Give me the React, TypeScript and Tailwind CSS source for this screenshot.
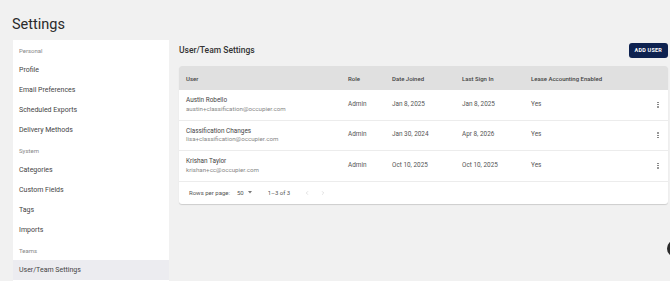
import { ChevronLeft, ChevronRight } from 'lucide-react';

type SideItem = { label: string; group?: boolean; active?: boolean };

const sideItems: SideItem[] = [
  { label: 'Personal', group: true },
  { label: 'Profile' },
  { label: 'Email Preferences' },
  { label: 'Scheduled Exports' },
  { label: 'Delivery Methods' },
  { label: 'System', group: true },
  { label: 'Categories' },
  { label: 'Custom Fields' },
  { label: 'Tags' },
  { label: 'Imports' },
  { label: 'Teams', group: true },
  { label: 'User/Team Settings', active: true },
];

const users = [
  {
    name: 'Austin Robello',
    email: 'austin+classification@occupier.com',
    role: 'Admin',
    joined: 'Jan 8, 2025',
    lastSignIn: 'Jan 8, 2025',
    lease: 'Yes',
  },
  {
    name: 'Classification Changes',
    email: 'lisa+classification@occupier.com',
    role: 'Admin',
    joined: 'Jan 30, 2024',
    lastSignIn: 'Apr 8, 2026',
    lease: 'Yes',
  },
  {
    name: 'Krishan Taylor',
    email: 'krishan+cc@occupier.com',
    role: 'Admin',
    joined: 'Oct 10, 2025',
    lastSignIn: 'Oct 10, 2025',
    lease: 'Yes',
  },
];

const cols = 'grid grid-cols-[162px_44px_70px_69px_1fr_18px] items-center pl-[7px] pr-[1px]';

function Kebab() {
  return (
    <div className="flex flex-col items-center gap-[1px]">
      <span className="w-[1.3px] h-[1.3px] rounded-full bg-[#777]" />
      <span className="w-[1.3px] h-[1.3px] rounded-full bg-[#777]" />
      <span className="w-[1.3px] h-[1.3px] rounded-full bg-[#777]" />
    </div>
  );
}

export default function App() {
  return (
    <div className="relative w-[670px] h-[281px] overflow-hidden bg-[#f1f1f1] text-[#444] font-['Roboto',sans-serif]">
      {/* Title */}
      <h1 className="pl-[12px] pt-[15px] text-[14.5px] leading-[20px] text-[#2a2a2a]">Settings</h1>

      <div className="flex gap-[10px] pl-[13px] mt-[5px]">
        {/* Sidebar */}
        <nav className="w-[156px] bg-white pb-[20px] shrink-0">
          {sideItems.map((item) => (
            <div
              key={item.label}
              className={`h-[20px] flex items-center px-[6px] ${
                item.group ? 'text-[6px] text-[#888]' : 'text-[7px] text-[#444]'
              } ${item.active ? 'bg-[#ececf0]' : ''}`}
            >
              {item.label}
            </div>
          ))}
        </nav>

        {/* Main */}
        <main className="flex-1 pr-[2px]">
          <div className="h-[19px] flex items-center justify-between">
            <h2 className="text-[8.5px] font-medium text-[#333] mt-[1px]">User/Team Settings</h2>
            <button className="h-[15px] mt-[1px] px-[6px] rounded-[3px] bg-[#0e2250] text-white text-[5.5px] font-bold tracking-[0.2px]">
              ADD USER
            </button>
          </div>

          {/* Table */}
          <div className="mt-[7px] bg-white rounded-[3px] overflow-hidden shadow-[0_1px_1px_rgba(0,0,0,0.15)]">
            <div className={`${cols} h-[24px] bg-[#e0e0e0] text-[6px] font-medium text-[#444]`}>
              <span>User</span>
              <span>Role</span>
              <span>Date Joined</span>
              <span>Last Sign In</span>
              <span>Lease Accounting Enabled</span>
              <span />
            </div>

            {users.map((u) => (
              <div key={u.email} className={`${cols} h-[30.5px] border-b border-[#ececec] text-[6.4px] text-[#555]`}>
                <div className="flex flex-col leading-[8.5px]">
                  <span className="text-[6.4px] text-[#444]">{u.name}</span>
                  <span className="text-[6.2px] text-[#888]">{u.email}</span>
                </div>
                <span>{u.role}</span>
                <span>{u.joined}</span>
                <span>{u.lastSignIn}</span>
                <span>{u.lease}</span>
                <div className="flex justify-center">
                  <Kebab />
                </div>
              </div>
            ))}

            <div className="h-[22px] flex items-center pl-[10px] text-[6px] text-[#555]">
              <span>Rows per page:</span>
              <span className="ml-[7px]">50</span>
              <svg className="ml-[4px]" width="4" height="2.5" viewBox="0 0 4 2.5">
                <path d="M0 0 L4 0 L2 2.5 Z" fill="#777" />
              </svg>
              <span className="ml-[16px]">1–3 of 3</span>
              <ChevronLeft className="ml-[14px] w-[6px] h-[6px] text-[#c4c4c4]" strokeWidth={2} />
              <ChevronRight className="ml-[10px] w-[6px] h-[6px] text-[#c4c4c4]" strokeWidth={2} />
            </div>
          </div>
        </main>
      </div>

      {/* Chat bubble at edge */}
      <div className="absolute left-[667px] top-[240px] w-[17px] h-[17px] rounded-full bg-[#2a2a2a]" />
    </div>
  );
}
